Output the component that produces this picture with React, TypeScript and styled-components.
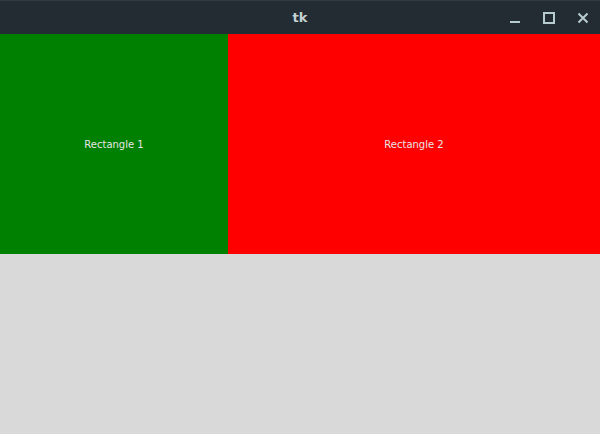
import React from "react";
import styled, { createGlobalStyle } from "styled-components";

const Global = createGlobalStyle`
  html, body { margin: 0; padding: 0; background: #d9d9d9; }
  body { width: 600px; height: 434px; overflow: hidden; font-family: "DejaVu Sans", sans-serif; }
`;

const Window = styled.div`
  width: 600px;
  height: 434px;
  display: flex;
  flex-direction: column;
  background: #d9d9d9;
`;

const TitleBar = styled.div`
  height: 34px;
  box-sizing: border-box;
  border-top: 1px solid #2f3a41;
  background: #232c33;
  display: grid;
  grid-template-columns: 1fr auto 1fr;
  align-items: center;
`;

const Title = styled.div`
  grid-column: 2;
  color: #c3d3d3;
  font-family: "DejaVu Sans", sans-serif;
  font-weight: bold;
  font-size: 13px;
  line-height: 1;
  margin-top: -1px;
`;

const Controls = styled.div`
  grid-column: 3;
  justify-self: end;
  display: flex;
  align-items: center;
  padding-right: 0;
`;

const ControlButton = styled.div`
  width: 34px;
  height: 32px;
  display: flex;
  align-items: center;
  justify-content: center;
`;

const Panels = styled.div`
  display: flex;
  height: 220px;
`;

const Panel = styled.div<{ $bg: string; $w: number }>`
  width: ${(p) => p.$w}px;
  background: ${(p) => p.$bg};
  display: flex;
  align-items: center;
  justify-content: center;
  color: #e6e6e6;
  font-family: "DejaVu Sans", sans-serif;
  font-size: 10px;
`;

const iconColor = "#b7cdcd";

export default function App() {
  return (
    <>
      <Global />
      <Window>
        <TitleBar>
          <Title>tk</Title>
          <Controls>
            <ControlButton>
              <svg width="12" height="12" viewBox="0 0 12 12">
                <rect x="1" y="9" width="10" height="2" fill={iconColor} />
              </svg>
            </ControlButton>
            <ControlButton>
              <svg width="12" height="12" viewBox="0 0 12 12">
                <rect x="1" y="1" width="10" height="10" fill="none" stroke={iconColor} strokeWidth="2" />
              </svg>
            </ControlButton>
            <ControlButton>
              <svg width="12" height="12" viewBox="0 0 12 12">
                <path d="M1.5 1.5 L10.5 10.5 M10.5 1.5 L1.5 10.5" stroke={iconColor} strokeWidth="2" />
              </svg>
            </ControlButton>
          </Controls>
        </TitleBar>
        <Panels>
          <Panel $bg="#008000" $w={228}>Rectangle 1</Panel>
          <Panel $bg="#ff0000" $w={372}>Rectangle 2</Panel>
        </Panels>
      </Window>
    </>
  );
}
